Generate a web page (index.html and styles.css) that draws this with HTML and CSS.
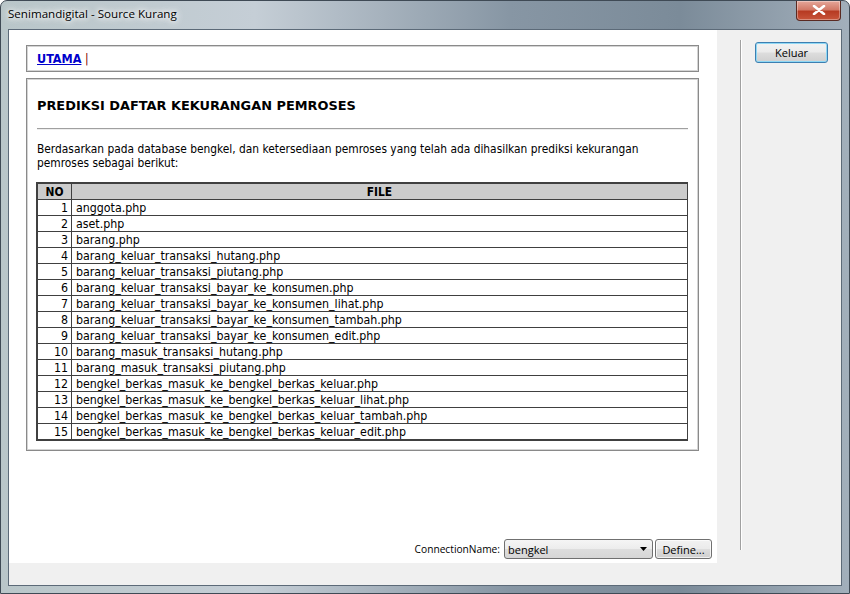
FILE: index.html
```html
<!DOCTYPE html>
<html>
<head>
<meta charset="utf-8">
<link rel="stylesheet" href="styles.css">
</head>
<body>
<div class="window">
  <div class="titlebar">
    <span class="title">Senimandigital - Source Kurang</span>
    <div class="close"><svg width="14" height="10" viewBox="0 0 14 10"><path d="M2 1 L12 9 M12 1 L2 9" stroke="#fff" stroke-width="2.6" stroke-linecap="round"/></svg></div>
  </div>
  <div class="client">
    <div class="main">
      <div class="content">
        <div class="navbox"><a class="navlink" href="#">UTAMA</a> <span class="sep">|</span></div>
        <div class="panel">
          <h1 class="heading">PREDIKSI DAFTAR KEKURANGAN PEMROSES</h1>
          <div class="rule"></div>
          <p class="desc">Berdasarkan pada database bengkel, dan ketersediaan pemroses yang telah ada dihasilkan prediksi kekurangan pemroses sebagai berikut:</p>
          <table class="files">
            <thead><tr><th class="no">NO</th><th>FILE</th></tr></thead>
            <tbody>
              <tr><td class="no">1</td><td>anggota.php</td></tr>
              <tr><td class="no">2</td><td>aset.php</td></tr>
              <tr><td class="no">3</td><td>barang.php</td></tr>
              <tr><td class="no">4</td><td>barang_keluar_transaksi_hutang.php</td></tr>
              <tr><td class="no">5</td><td>barang_keluar_transaksi_piutang.php</td></tr>
              <tr><td class="no">6</td><td>barang_keluar_transaksi_bayar_ke_konsumen.php</td></tr>
              <tr><td class="no">7</td><td>barang_keluar_transaksi_bayar_ke_konsumen_lihat.php</td></tr>
              <tr><td class="no">8</td><td>barang_keluar_transaksi_bayar_ke_konsumen_tambah.php</td></tr>
              <tr><td class="no">9</td><td>barang_keluar_transaksi_bayar_ke_konsumen_edit.php</td></tr>
              <tr><td class="no">10</td><td>barang_masuk_transaksi_hutang.php</td></tr>
              <tr><td class="no">11</td><td>barang_masuk_transaksi_piutang.php</td></tr>
              <tr><td class="no">12</td><td>bengkel_berkas_masuk_ke_bengkel_berkas_keluar.php</td></tr>
              <tr><td class="no">13</td><td>bengkel_berkas_masuk_ke_bengkel_berkas_keluar_lihat.php</td></tr>
              <tr><td class="no">14</td><td>bengkel_berkas_masuk_ke_bengkel_berkas_keluar_tambah.php</td></tr>
              <tr><td class="no">15</td><td>bengkel_berkas_masuk_ke_bengkel_berkas_keluar_edit.php</td></tr>
            </tbody>
          </table>
        </div>
        <div class="spacer"></div>
        <div class="connrow">
          <span class="connlabel">ConnectionName:</span>
          <div class="combo"><span>bengkel</span><svg width="7" height="4" viewBox="0 0 7 4"><path d="M0 0 H7 L3.5 4 Z" fill="#000"/></svg></div>
          <div class="btn define">Define...</div>
        </div>
      </div>
      <div class="side">
        <div class="vsep"></div>
        <div class="sidebtns"><div class="btn keluar">Keluar</div></div>
      </div>
    </div>
    <div class="status"></div>
  </div>
</div>
</body>
</html>
```

FILE: styles.css
```css
html, body { margin: 0; padding: 0; }
body { width: 850px; height: 594px; overflow: hidden; background: #fff; }

.window {
  width: 850px; height: 594px; box-sizing: border-box;
  display: flex; flex-direction: column;
  border-radius: 7px 7px 0 0;
  border: 1px solid #3f4a55;
  background: linear-gradient(90deg, #b9c6c9 0%, #c5ced6 30%, #8796a4 60%, #7b8b99 80%, #a2afbb 100%);
  padding: 0 7px 7px 7px;
}

.titlebar {
  height: 28px; flex: none;
  display: flex; align-items: center; justify-content: space-between;
  position: relative;
}
.title {
  font-family: "Open Sans", "Noto Sans", sans-serif;
  font-size: 11.6px; color: #000;
  margin-top: -3px;
  text-shadow: 0 0 8px #fff, 0 0 8px #fff, 0 0 4px #fff;
}
.close {
  width: 43px; height: 19px; margin-top: -9px; margin-right: 1px;
  border: 1px solid #5a2a22; border-top: none;
  border-radius: 0 0 4px 4px;
  background: linear-gradient(180deg, #e5a79a 0%, #d27a68 45%, #b73b23 55%, #c8553b 100%);
  display: flex; align-items: center; justify-content: center;
  box-shadow: inset 0 0 0 1px rgba(255,255,255,0.35);
}

.client {
  flex: 1; display: flex; flex-direction: column;
  border: 1px solid #5c6a78;
  background: #f0f0f0;
}
.main { flex: 1; display: flex; min-height: 0; }
.content {
  width: 708px; flex: none; background: #fff;
  display: flex; flex-direction: column;
  padding: 15px 5px 4px 17px; box-sizing: border-box;
}
.side { flex: 1; display: flex; padding-left: 23px; }
.vsep {
  width: 1px; margin: 10px 0 13px 0;
  background: #a0a0a0; border-right: 1px solid #fff;
}
.sidebtns { padding: 12px 0 0 13px; }
.status { height: 22px; flex: none; background: #f0f0f0; }

.navbox {
  width: 673px; height: 27px; box-sizing: border-box;
  border: 1px solid #8a8a8a;
  box-shadow: inset 0 0 0 1px #d4d4d4;
  padding: 5px 0 0 10px;
  font-family: "DejaVu Sans Condensed", "DejaVu Sans", sans-serif;
  font-size: 12px;
}
.navlink { color: #0000cc; font-weight: bold; text-decoration: underline; font-size: 12.5px; }
.sep { color: #800000; }

.panel {
  width: 673px; height: 373px; box-sizing: border-box; margin-top: 6px;
  border: 1px solid #8a8a8a;
  box-shadow: inset 0 0 0 1px #d4d4d4;
  padding: 19px 10px 0 10px;
  font-family: "DejaVu Sans Condensed", "DejaVu Sans", sans-serif;
  font-size: 11.85px; color: #000;
}
.heading {
  margin: 0; font-family: "DejaVu Sans", sans-serif;
  font-size: 12.9px; font-weight: bold; line-height: 16px;
}
.rule { height: 1px; background: #a0a0a0; margin: 14px 0 0 0; border-bottom: 1px solid #eee; }
.desc { margin: 12px 0 0 0; line-height: 14px; width: 610px; }

.files {
  width: 652px; margin-top: 12px; margin-left: -1px;
  border-collapse: collapse;
  border-left: 2px solid #404040;
  border-bottom: 2px solid #404040;
  font-size: 12.3px;
  table-layout: fixed;
}
.files th, .files td {
  border: 1px solid #404040; height: 15px; line-height: 14px;
}
.files th { background: #cccccc; font-weight: bold; text-align: center; border-top: 2px solid #404040; padding: 0; font-size: 11.85px; }
.files th.no { width: 33px; }
.files td.no { text-align: right; padding: 0 3px 0 0; }
.files td { padding: 0 0 0 4px; white-space: nowrap; }

.spacer { flex: 1; }
.connrow {
  display: flex; align-items: center; justify-content: flex-end;
  font-family: "Open Sans", "Noto Sans", sans-serif; font-size: 11px;
}
.connlabel { margin-right: 4px; font-size: 10.2px; }
.combo {
  width: 149px; height: 20px; box-sizing: border-box;
  border: 1px solid #707070; border-radius: 3px;
  background: linear-gradient(180deg, #f5f5f5 0%, #ececec 50%, #dddddd 51%, #d6d6d6 100%);
  display: flex; align-items: center; justify-content: space-between;
  padding: 0 5px 0 3px; margin-right: 2px;
}
.btn {
  box-sizing: border-box;
  border: 1px solid #707070; border-radius: 3px;
  background: linear-gradient(180deg, #f2f2f2 0%, #ebebeb 48%, #dddddd 52%, #cfcfcf 100%);
  display: flex; align-items: center; justify-content: center;
  font-family: "Open Sans", "Noto Sans", sans-serif; font-size: 11px; color: #000;
  box-shadow: inset 0 0 0 1px rgba(255,255,255,0.7);
}
.define { width: 57px; height: 20px; }
.keluar {
  width: 73px; height: 21px;
  border-color: #3c7fb1;
  box-shadow: inset 0 0 0 1px #8fd8f5;
}
```
